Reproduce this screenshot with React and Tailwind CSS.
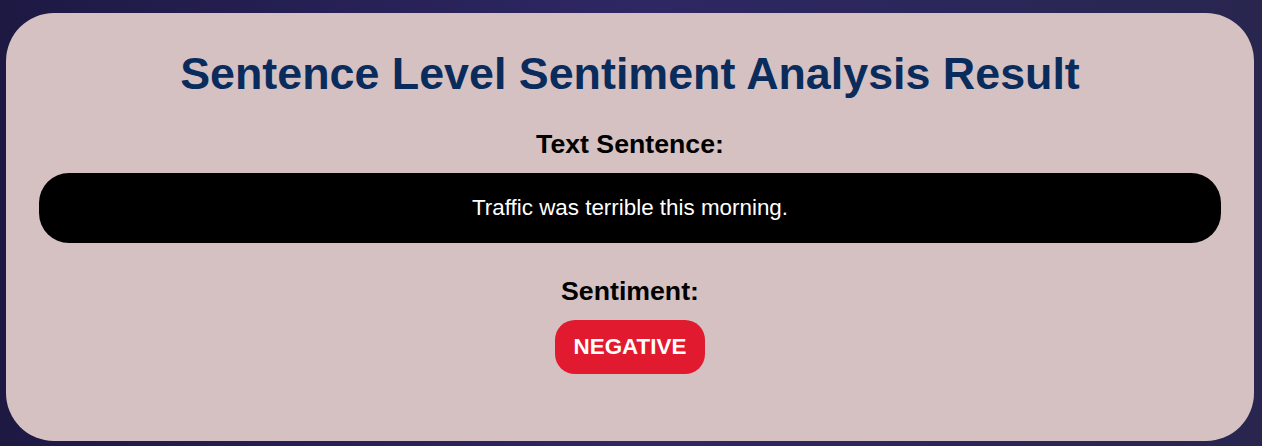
export default function App() {
  return (
    <div
      className="w-[1262px] h-[446px] pt-[13px] pl-[6px] bg-[linear-gradient(90deg,#1d1943_0%,#2e2764_50%,#28264f_100%)]"
      style={{ fontFamily: '"Liberation Sans", Arial, sans-serif' }}
    >
      <div className="w-[1248px] h-[428px] rounded-[48px] bg-[#d6c1c2] px-[33px] pt-[35px] flex flex-col items-center">
        <h1 className="text-[44.8px] leading-[1.15] font-bold text-[#0a2c5c] text-center">
          Sentence Level Sentiment Analysis Result
        </h1>
        <h3 className="mt-[29px] text-[26.7px] leading-[1.15] font-bold text-black">
          Text Sentence:
        </h3>
        <div className="mt-[14px] w-full rounded-[30px] bg-black py-[22px] text-center text-white text-[22.4px] leading-[1.15]">
          Traffic was terrible this morning.
        </div>
        <h3 className="mt-[33px] text-[26.7px] leading-[1.15] font-bold text-black">
          Sentiment:
        </h3>
        <div className="mt-[13px] rounded-[20px] bg-[#e11a2f] px-[18.5px] py-[14.5px] text-white font-bold text-[22.4px] leading-[1.15]">
          NEGATIVE
        </div>
      </div>
    </div>
  );
}
